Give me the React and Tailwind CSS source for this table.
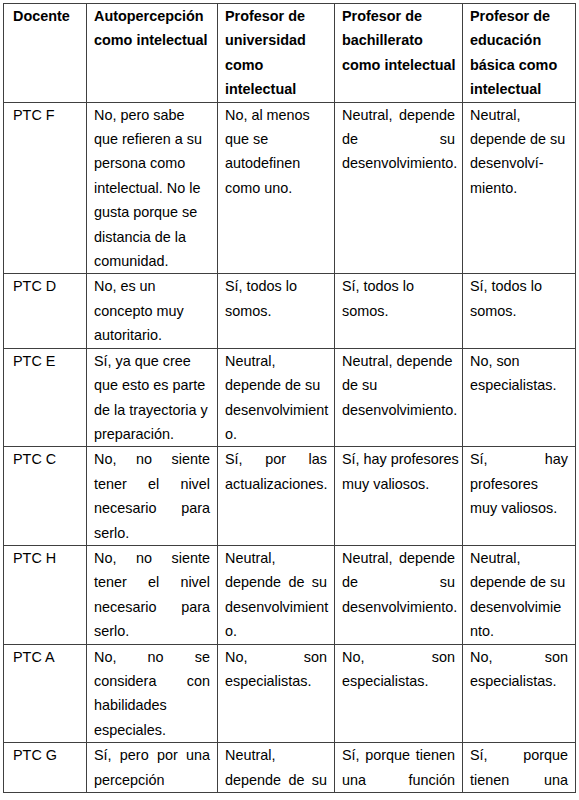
import React from 'react';

// "^" at the start of a line = justified line (words spread to both edges)
const header = [
  ['Docente'],
  ['Autopercepción', 'como intelectual'],
  ['Profesor de', 'universidad', 'como', 'intelectual'],
  ['Profesor de', 'bachillerato', 'como intelectual'],
  ['Profesor de', 'educación', 'básica como', 'intelectual'],
];

const rows = [
  {
    docente: 'PTC F',
    cells: [
      ['No, pero sabe', 'que refieren a su', 'persona como', 'intelectual. No le', 'gusta porque se', 'distancia de la', 'comunidad.'],
      ['No, al menos', 'que se', 'autodefinen', 'como uno.'],
      ['^Neutral, depende', '^de su', 'desenvolvimiento.'],
      ['Neutral,', 'depende de su', 'desenvolví-', 'miento.'],
    ],
  },
  {
    docente: 'PTC D',
    cells: [
      ['No, es un', 'concepto muy', 'autoritario.'],
      ['Sí, todos lo', 'somos.'],
      ['Sí, todos lo', 'somos.'],
      ['Sí, todos lo', 'somos.'],
    ],
  },
  {
    docente: 'PTC E',
    cells: [
      ['Sí, ya que cree', 'que esto es parte', 'de la trayectoria y', 'preparación.'],
      ['Neutral,', 'depende de su', 'desenvolvimient', 'o.'],
      ['Neutral, depende', 'de su', 'desenvolvimiento.'],
      ['No, son', 'especialistas.'],
    ],
  },
  {
    docente: 'PTC C',
    cells: [
      ['^No, no siente', '^tener el nivel', '^necesario para', 'serlo.'],
      ['^Sí, por las', 'actualizaciones.'],
      ['Sí, hay profesores', 'muy valiosos.'],
      ['^Sí, hay', 'profesores', 'muy valiosos.'],
    ],
  },
  {
    docente: 'PTC H',
    cells: [
      ['^No, no siente', '^tener el nivel', '^necesario para', 'serlo.'],
      ['Neutral,', '^depende de su', 'desenvolvimient', 'o.'],
      ['^Neutral, depende', '^de su', 'desenvolvimiento.'],
      ['Neutral,', 'depende de su', 'desenvolvimie', 'nto.'],
    ],
  },
  {
    docente: 'PTC A',
    cells: [
      ['^No, no se', '^considera con', 'habilidades', 'especiales.'],
      ['^No, son', 'especialistas.'],
      ['^No, son', 'especialistas.'],
      ['^No, son', 'especialistas.'],
    ],
  },
  {
    docente: 'PTC G',
    cells: [
      ['^Sí, pero por una', 'percepción'],
      ['Neutral,', '^depende de su'],
      ['^Sí, porque tienen', '^una función'],
      ['^Sí, porque', '^tienen una'],
    ],
  },
];

function Line({ text }) {
  if (text.startsWith('^')) {
    const words = text.slice(1).split(' ');
    return (
      <div className="flex justify-between whitespace-nowrap">
        {words.map((w, i) => (
          <span key={i}>{w}</span>
        ))}
      </div>
    );
  }
  return <div className="whitespace-nowrap">{text}</div>;
}

function Cell({ lines, first, bold }) {
  return (
    <td
      className={`border border-[#404040] align-top p-0 ${first ? 'pl-[9px] pr-[6px]' : 'px-[7px]'} ${bold ? 'font-bold' : ''}`}
    >
      {lines.map((l, i) => (
        <Line key={i} text={l} />
      ))}
    </td>
  );
}

export default function App() {
  return (
    <div className="bg-white w-[579px] h-[800px] overflow-hidden pt-[3px] pl-[3px] text-[14.4px] leading-[24.4px] text-black [font-family:'Liberation_Sans',Arial,sans-serif]">
      <table className="border-collapse table-fixed w-[572px]">
        <colgroup>
          <col className="w-[83px]" />
          <col className="w-[131px]" />
          <col className="w-[117px]" />
          <col className="w-[128px]" />
          <col className="w-[113px]" />
        </colgroup>
        <thead>
          <tr>
            {header.map((h, i) => (
              <Cell key={i} lines={h} first={i === 0} bold />
            ))}
          </tr>
        </thead>
        <tbody>
          {rows.map((r) => (
            <tr key={r.docente}>
              <Cell lines={[r.docente]} first />
              {r.cells.map((c, i) => (
                <Cell key={i} lines={c} />
              ))}
            </tr>
          ))}
        </tbody>
      </table>
    </div>
  );
}
